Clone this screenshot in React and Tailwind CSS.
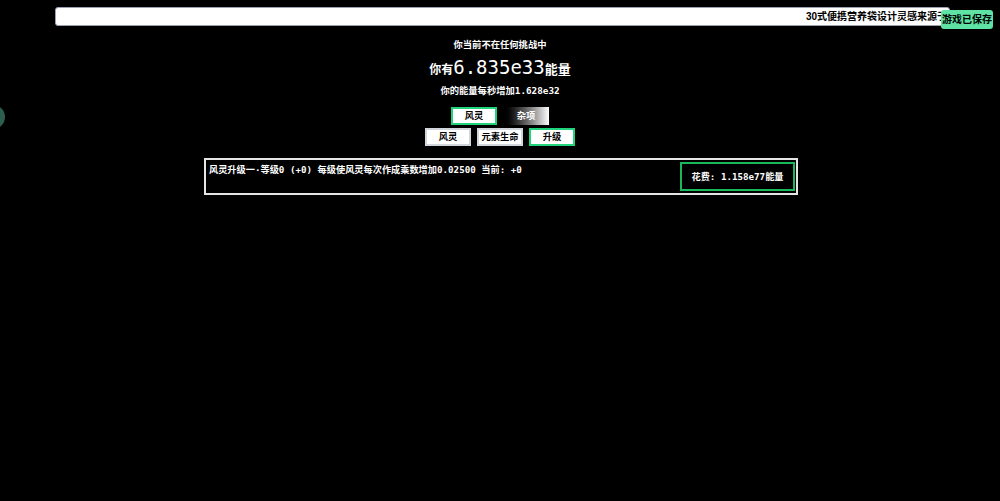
import { useState } from "react";

function App() {
  const [tab, setTab] = useState("wind");
  const [sub, setSub] = useState("upgrade");

  const mono = { fontFamily: '"DejaVu Sans Mono", "Noto Sans CJK SC", monospace' };
  const sans = { fontFamily: '"Liberation Sans", "Noto Sans CJK SC", sans-serif' };

  return (
    <div
      className="relative min-h-[501px] w-full overflow-hidden bg-black text-white"
      style={mono}
    >
      {/* news ticker */}
      <div className="px-[55px] pt-[7px]">
        <div className="h-[19px] w-[895px] overflow-hidden rounded-[3px] border border-gray-400 bg-white">
          <div
            className="whitespace-nowrap pl-[750px] text-[10px] font-bold leading-[17px] text-black"
            style={sans}
          >
            30式便携营养袋设计灵感来源于拥有悠久历史的传统食品
          </div>
        </div>
      </div>

      <div
        className="absolute right-[7px] top-[10px] rounded-[3px] bg-[#5ee3a4] px-[1px] text-[10px] font-bold leading-[19px] text-black"
        style={sans}
      >
        游戏已保存
      </div>

      <div className="absolute -left-[19px] top-[105px] h-[24px] w-[24px] rounded-full bg-[#2c5e4e]"></div>

      <div className="mt-[12px] flex flex-col items-center">
        <div className="text-[9.3px] font-bold leading-[14px]">你当前不在任何挑战中</div>
        <div className="mt-[3px] flex items-baseline leading-[24px]">
          <span className="text-[12px] font-bold">你有</span>
          <span className="text-[19px]">6.835e33</span>
          <span className="text-[13px] font-bold">能量</span>
        </div>
        <div className="mt-[2px] text-[9.3px] font-bold leading-[14px]">你的能量每秒增加1.628e32</div>

        <div className="mt-[9px] flex gap-[6px]">
          <button
            onClick={() => setTab("wind")}
            className={`h-[18px] w-[46px] border-2 bg-white text-[9.3px] font-bold leading-[14px] text-black ${tab === "wind" ? "border-[#1fd47a]" : "border-gray-400"}`}
          >
            风灵
          </button>
          <button
            onClick={() => setTab("misc")}
            className="h-[18px] w-[46px] bg-gradient-to-r from-black to-white text-[9.3px] font-bold leading-[14px] text-white"
          >
            杂项
          </button>
        </div>

        <div className="mt-[3px] flex gap-[6px]">
          {[
            ["wind", "风灵"],
            ["elem", "元素生命"],
            ["upgrade", "升级"],
          ].map(([k, label]) => (
            <button
              key={k}
              onClick={() => setSub(k)}
              className={`h-[18px] w-[46px] border-2 bg-white text-[9.3px] font-bold leading-[14px] text-black ${sub === k ? "border-[#1fd47a]" : "border-gray-300"}`}
            >
              {label}
            </button>
          ))}
        </div>

        <div className="ml-[2px] mt-[12px] flex h-[37px] w-[594px] items-start justify-between border-2 border-[#e5e5e5] pl-[3px] pr-[1px]">
          <div className="pt-[3px] text-[9.2px] font-bold leading-[14px]">
            风灵升级一·等级0 (+0) 每级使风灵每次作成乘数增加0.02500 当前: +0
          </div>
          <button className="mt-[2px] h-[29px] w-[115px] border-2 border-[#19b85a] bg-black text-[9.2px] font-bold text-white">
            花费: 1.158e77能量
          </button>
        </div>
      </div>
    </div>
  );
}

export default App;
